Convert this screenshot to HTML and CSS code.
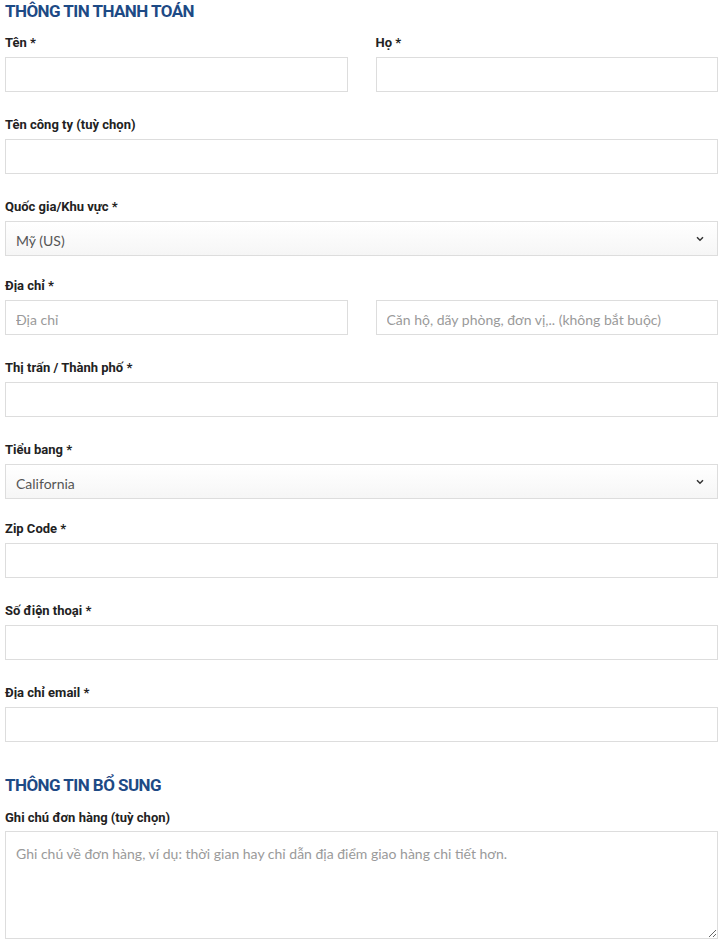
FILE: index.html
```html
<!DOCTYPE html>
<html lang="vi">
<head>
<meta charset="utf-8">
<title>Thanh toán</title>
<link rel="stylesheet" href="styles.css">
</head>
<body>
<form class="checkout">
  <h3 class="section-title">THÔNG TIN THANH TOÁN</h3>

  <div class="row two">
    <div class="field">
      <label class="label">Tên *</label>
      <input class="input" type="text">
    </div>
    <div class="field">
      <label class="label">Họ *</label>
      <input class="input" type="text">
    </div>
  </div>

  <div class="row">
    <label class="label">Tên công ty (tuỳ chọn)</label>
    <input class="input" type="text">
  </div>

  <div class="row row-select">
    <label class="label">Quốc gia/Khu vực *</label>
    <div class="select">
      <span class="select-value">Mỹ (US)</span>
      <svg class="chevron" width="8" height="6" viewBox="0 0 8 6"><path d="M1 1.2l3 3 3-3" fill="none" stroke="#333" stroke-width="1.5"/></svg>
    </div>
  </div>

  <div class="row">
    <label class="label">Địa chỉ *</label>
    <div class="two">
      <input class="input" type="text" placeholder="Địa chỉ">
      <input class="input" type="text" placeholder="Căn hộ, dãy phòng, đơn vị,.. (không bắt buộc)">
    </div>
  </div>

  <div class="row">
    <label class="label">Thị trấn / Thành phố *</label>
    <input class="input" type="text">
  </div>

  <div class="row row-select">
    <label class="label">Tiểu bang *</label>
    <div class="select">
      <span class="select-value">California</span>
      <svg class="chevron" width="8" height="6" viewBox="0 0 8 6"><path d="M1 1.2l3 3 3-3" fill="none" stroke="#333" stroke-width="1.5"/></svg>
    </div>
  </div>

  <div class="row">
    <label class="label">Zip Code *</label>
    <input class="input" type="text">
  </div>

  <div class="row">
    <label class="label">Số điện thoại *</label>
    <input class="input" type="text">
  </div>

  <div class="row">
    <label class="label">Địa chỉ email *</label>
    <input class="input" type="text">
  </div>

  <h3 class="section-title second">THÔNG TIN BỔ SUNG</h3>

  <div class="row last">
    <label class="label label-tight">Ghi chú đơn hàng (tuỳ chọn)</label>
    <textarea class="textarea" placeholder="Ghi chú về đơn hàng, ví dụ: thời gian hay chỉ dẫn địa điểm giao hàng chi tiết hơn."></textarea>
  </div>
</form>
</body>
</html>
```

FILE: styles.css
```css
* { box-sizing: border-box; }

html, body {
  margin: 0;
  padding: 0;
  background: #fff;
}

.checkout {
  padding: 0 4px 0 5px;
  font-family: Lato, "Open Sans", sans-serif;
}

.section-title {
  margin: 0 0 10px;
  font-family: Roboto, "Liberation Sans", sans-serif;
  font-weight: 700;
  font-size: 17px;
  line-height: 22px;
  letter-spacing: -0.55px;
  color: #1d4a85;
}

.section-title.second {
  margin-top: 32px;
  margin-bottom: 11px;
}

.row {
  margin-bottom: 22px;
}

.row.row-select {
  margin-bottom: 19px;
}

.row.last {
  margin-bottom: 0;
}

.two {
  display: grid;
  grid-template-columns: 1fr 1fr;
  column-gap: 28px;
}

.label {
  display: block;
  margin-bottom: 4px;
  font-family: Roboto, "Liberation Sans", sans-serif;
  font-weight: 700;
  font-size: 13px;
  line-height: 21px;
  color: #222;
}

.label-tight {
  margin-bottom: 3px;
}

.input {
  display: block;
  width: 100%;
  height: 35px;
  margin: 0;
  padding: 3px 10px 0;
  border: 1px solid #ddd;
  border-radius: 0;
  background: #fff;
  font-family: Lato, "Open Sans", sans-serif;
  font-size: 14px;
  color: #555;
  outline: none;
}

.input::placeholder,
.textarea::placeholder {
  color: #9a9a9a;
  opacity: 1;
}

.select {
  display: flex;
  align-items: center;
  justify-content: space-between;
  height: 35px;
  padding: 3px 13px 0 10px;
  border: 1px solid #ddd;
  background: linear-gradient(#fff, #f6f6f6);
  font-size: 14px;
  color: #555;
}

.chevron {
  display: block;
  margin-top: -3px;
}

.textarea {
  display: block;
  width: 100%;
  height: 108px;
  margin: 0;
  padding: 12px 10px;
  border: 1px solid #ddd;
  border-radius: 0;
  font-family: Lato, "Open Sans", sans-serif;
  font-size: 14px;
  line-height: 20px;
  color: #555;
  outline: none;
  resize: vertical;
}
```
